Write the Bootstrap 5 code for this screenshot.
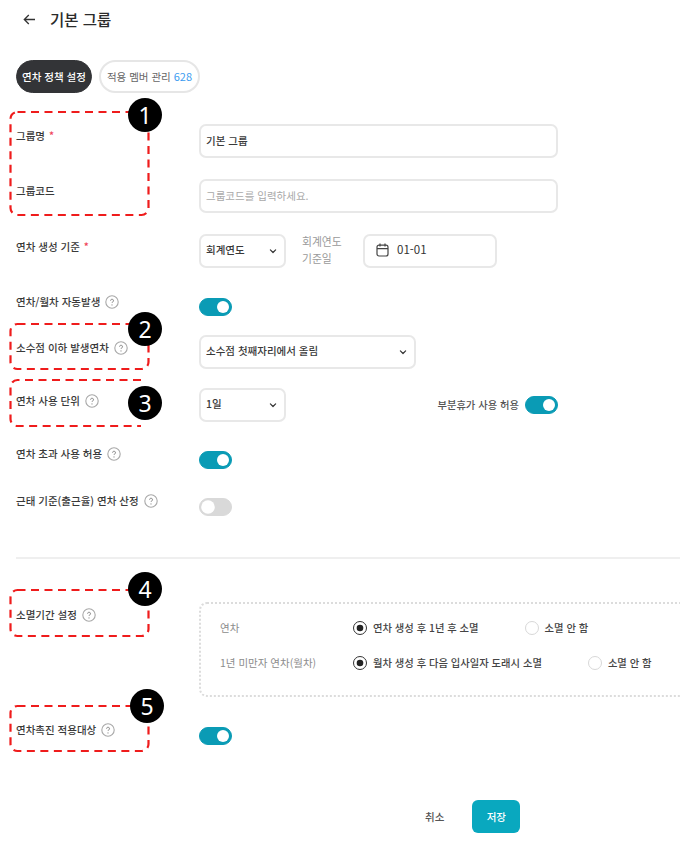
<!doctype html>
<html lang="ko"><head><meta charset="utf-8">
<link href="https://cdn.jsdelivr.net/npm/bootstrap@5.3.0/dist/css/bootstrap.min.css" rel="stylesheet">
<style>
html,body{margin:0;background:#fff}
body{font-family:"Noto Sans CJK KR","Noto Sans",sans-serif;font-size:10.5px;color:#333;width:680px;height:854px;overflow:hidden}
.pg{position:relative;width:680px;height:854px;overflow:hidden;padding:0 0 0 16px}
.hdr{height:38px;padding-left:7px;gap:14px}
.hdr h1{font-size:15.5px;font-weight:500;margin:0;color:#2b2b2b}
.tabs{margin-top:22px;gap:7px;height:33px}
.tb{height:33px;border-radius:17px;font-size:10.5px;padding:0 6px;font-weight:500;display:flex;align-items:center;white-space:nowrap}
.tb-on{width:76px;justify-content:center;background:#333437;color:#fff;border:1px solid #333437}
.tb-off{width:101px;justify-content:center;background:#fff;color:#666;border:2px solid #e6e6e6;font-weight:400}
.tb-off b{color:#3a9cf0;font-weight:400;margin-left:3px;font-size:11px}
.rw{display:flex;align-items:flex-start}
.lb{width:183px;flex:none;font-size:10.5px;font-weight:500;color:#3a3a3a;display:flex;align-items:center;gap:5px;line-height:16px;white-space:nowrap}
.pt5{padding-top:5px}
.pt4{padding-top:4px}
.req{color:#f0445a;margin-left:-1px}
.qm{width:14px;height:14px;flex:none;display:block}
.fc{height:34px;border:2px solid #e8e8e8;border-radius:7px;font-size:10.5px;font-weight:500;color:#3a3a3a;padding:0 5px 2px;box-shadow:none}
.fc::placeholder{color:#a9a9a9;font-weight:400}
.fw{width:359px}
.sl{background-image:url("data:image/svg+xml,%3csvg xmlns='http://www.w3.org/2000/svg' viewBox='0 0 16 16'%3e%3cpath fill='none' stroke='%23333' stroke-linecap='round' stroke-linejoin='round' stroke-width='1.6' d='M4.5 6.5l3.5 3.5 3.5-3.5'/%3e%3c/svg%3e");background-size:12px 12px;background-position:right 5px center}
.s87{width:87px}
.s217{width:217px}
.sub{width:48px;margin-left:16px;margin-top:-1px;color:#9a9a9a;line-height:17px;font-size:10.8px}
.cal{width:134px;height:34px;margin-left:13px;border:2px solid #e8e8e8;border-radius:7px;gap:8px;padding:0 0 2px 11px;font-size:11.5px;color:#333;background:#fff}
.form-switch .tg{width:33px;height:18px;margin:0;float:none;border-radius:9px;box-shadow:none;border:1px solid #0a9bb5}
.form-switch .tg:checked{background-color:#0a9bb5;border-color:#0a9bb5}
.form-switch .tg:not(:checked){background-color:#d9d9d9;border-color:#d9d9d9;background-image:url("data:image/svg+xml,%3csvg xmlns='http://www.w3.org/2000/svg' viewBox='-4 -4 8 8'%3e%3ccircle r='3.4' fill='%23fff'/%3e%3c/svg%3e")}
.swc{padding:0;min-height:0;margin:0;display:flex}
.mt5x{margin-top:5px}
.rgt{width:359px;height:34px;display:flex;align-items:center;justify-content:flex-end}
.part{color:#555;font-size:10.3px;font-weight:500;white-space:nowrap;margin-right:6px}
.hr1{margin:41px 0 0;border:0;border-top:2px solid #efefef;opacity:1}
.pbox{width:520px;height:95px;border:2px dotted #dcdcdc;border-radius:8px;flex:none;padding:6px 0 0 19px}
.pl{width:133px;color:#8c8c8c;font-size:10.5px;flex:none}
.pr{height:35px}
.rd{display:flex;align-items:center;gap:6px;margin:0;padding:0;min-height:0;font-size:10.3px;color:#444;font-weight:500;white-space:nowrap}
.rd2{margin-left:46px}
.rd .form-check-input{width:14px;height:14px;margin:0;float:none;box-shadow:none;border:1px solid #d8d8d8;background-color:#fff}
.rd .form-check-input:checked{border:1px solid #333;background-color:#fff;background-image:url("data:image/svg+xml,%3csvg xmlns='http://www.w3.org/2000/svg' viewBox='-4 -4 8 8'%3e%3ccircle r='2.2' fill='%23222'/%3e%3c/svg%3e");background-size:100% 100%}
.fb{padding-left:409px;margin-top:55px}
.bt{height:33px;font-size:10.5px;font-weight:500;padding:0;border-radius:6px;--bs-btn-border-width:0}
.bt-c{color:#555;background:#fff}
.bt-s{width:48px;margin-left:28px;background:#09a8bf;color:#fff;--bs-btn-hover-bg:#09a8bf;--bs-btn-hover-color:#fff}
.mk{position:absolute;left:0;top:0;width:680px;height:854px;pointer-events:none}
.dash{fill:none;stroke:#ef1c1c;stroke-width:2.2;stroke-dasharray:8 5.5}
.num{position:absolute;width:34px;height:34px;border-radius:50%;background:#000;color:#fff;font-size:23px;line-height:34px;text-align:center;font-family:"Noto Sans","Noto Sans CJK KR",sans-serif;font-weight:400}
.n1{left:128px;top:98px}.n2{left:128px;top:312px}.n3{left:128px;top:386px}.n4{left:128px;top:572px}.n5{left:130px;top:689px}
.m31{margin-top:31px}.m21{margin-top:21px}.m26{margin-top:26px}.m19{margin-top:19px}.m24{margin-top:24px}.m43{margin-top:43px}.m25{margin-top:25px}
</style></head><body>
<svg width="0" height="0" class="position-absolute"><defs>
<g id="q"><circle cx="7" cy="7" r="6.2" fill="#fff" stroke="#a8a8a8" stroke-width="1.1"/><path d="M5.6 5.7a1.45 1.45 0 1 1 2.2 1.2c-.5.3-.8.6-.8 1.1" fill="none" stroke="#8a8a8a" stroke-width="1"/><circle cx="7" cy="9.9" r=".6" fill="#8a8a8a"/></g>
</defs></svg>
<div class="pg">
 <div class="hdr d-flex align-items-center">
  <svg width="13" height="11" viewBox="0 0 13 11" fill="none" stroke="#333" stroke-width="1.3"><path d="M12 5.5H1.5M5.8 1 1.3 5.5 5.8 10"/></svg>
  <h1>기본 그룹</h1>
 </div>
 <div class="tabs d-flex">
  <div class="tb tb-on">연차 정책 설정</div>
  <div class="tb tb-off">적용 멤버 관리 <b>628</b></div>
 </div>
 <div class="rw m31">
  <div class="lb pt4">그룹명 <span class="req">*</span></div>
  <input class="form-control fc fw" value="기본 그룹">
 </div>
 <div class="rw m21">
  <div class="lb pt4">그룹코드</div>
  <input class="form-control fc fw" placeholder="그룹코드를 입력하세요.">
 </div>
 <div class="rw m21">
  <div class="lb pt5">연차 생성 기준 <span class="req">*</span></div>
  <select class="form-select fc sl s87"><option>회계연도</option></select>
  <div class="sub">회계연도 기준일</div>
  <div class="cal d-flex align-items-center">
   <svg width="13" height="14" viewBox="0 0 13 14" fill="none" stroke="#444" stroke-width="1.2"><rect x="1" y="2.2" width="11" height="10.8" rx="2"/><path d="M1 5.6h11M4 .6v3M9 .6v3"/></svg>
   <span>01-01</span>
  </div>
 </div>
 <div class="rw m26">
  <div class="lb">연차/월차 자동발생 <svg class="qm" viewBox="0 0 14 14"><use href="#q"/></svg></div>
  <div class="form-check form-switch swc mt-1"><input class="form-check-input tg" type="checkbox" checked></div>
 </div>
 <div class="rw m19">
  <div class="lb pt5">소수점 이하 발생연차 <svg class="qm" viewBox="0 0 14 14"><use href="#q"/></svg></div>
  <select class="form-select fc sl s217"><option>소수점 첫째자리에서 올림</option></select>
 </div>
 <div class="rw m19">
  <div class="lb pt5">연차 사용 단위 <svg class="qm" viewBox="0 0 14 14"><use href="#q"/></svg></div>
  <div class="rgt">
   <select class="form-select fc sl s87 me-auto"><option>1일</option></select>
   <span class="part">부분휴가 사용 허용</span>
   <div class="form-check form-switch swc"><input class="form-check-input tg" type="checkbox" checked></div>
  </div>
 </div>
 <div class="rw m24">
  <div class="lb">연차 초과 사용 허용 <svg class="qm" viewBox="0 0 14 14"><use href="#q"/></svg></div>
  <div class="form-check form-switch swc mt5x"><input class="form-check-input tg" type="checkbox" checked></div>
 </div>
 <div class="rw m24">
  <div class="lb">근태 기준(출근율) 연차 산정 <svg class="qm" viewBox="0 0 14 14"><use href="#q"/></svg></div>
  <div class="form-check form-switch swc mt5x"><input class="form-check-input tg" type="checkbox"></div>
 </div>
 <hr class="hr1">
 <div class="rw m43">
  <div class="lb pt5">소멸기간 설정 <svg class="qm" viewBox="0 0 14 14"><use href="#q"/></svg></div>
  <div class="pbox d-flex flex-column">
   <div class="pr d-flex align-items-center"><div class="pl">연차</div>
    <label class="rd form-check"><input class="form-check-input" type="radio" name="a" checked>연차 생성 후 1년 후 소멸</label>
    <label class="rd rd2 form-check"><input class="form-check-input" type="radio" name="a">소멸 안 함</label></div>
   <div class="pr d-flex align-items-center"><div class="pl">1년 미만자 연차(월차)</div>
    <label class="rd form-check"><input class="form-check-input" type="radio" name="b" checked>월차 생성 후 다음 입사일자 도래시 소멸</label>
    <label class="rd rd2 form-check"><input class="form-check-input" type="radio" name="b">소멸 안 함</label></div>
  </div>
 </div>
 <div class="rw m25">
  <div class="lb">연차촉진 적용대상 <svg class="qm" viewBox="0 0 14 14"><use href="#q"/></svg></div>
  <div class="form-check form-switch swc mt5x"><input class="form-check-input tg" type="checkbox" checked></div>
 </div>
 <div class="fb d-flex align-items-center">
  <button class="btn bt bt-c" type="button">취소</button>
  <button class="btn bt bt-s" type="button">저장</button>
 </div>
 <svg class="mk" viewBox="0 0 680 854">
  <rect class="dash" x="10.5" y="112" width="138" height="103" rx="7"/>
  <rect class="dash" x="10.5" y="324" width="138" height="45" rx="7"/>
  <path class="dash" d="M141 380H17.5a7 7 0 0 0-7 7v32a7 7 0 0 0 7 7H141"/>
  <rect class="dash" x="10.5" y="590" width="138" height="46" rx="7"/>
  <rect class="dash" x="10.5" y="706" width="138" height="45" rx="7"/>
 </svg>
 <div class="num n1">1</div><div class="num n2">2</div><div class="num n3">3</div><div class="num n4">4</div><div class="num n5">5</div>
</div>
<script src="https://cdn.jsdelivr.net/npm/bootstrap@5.3.0/dist/js/bootstrap.bundle.min.js"></script>
</body></html>
